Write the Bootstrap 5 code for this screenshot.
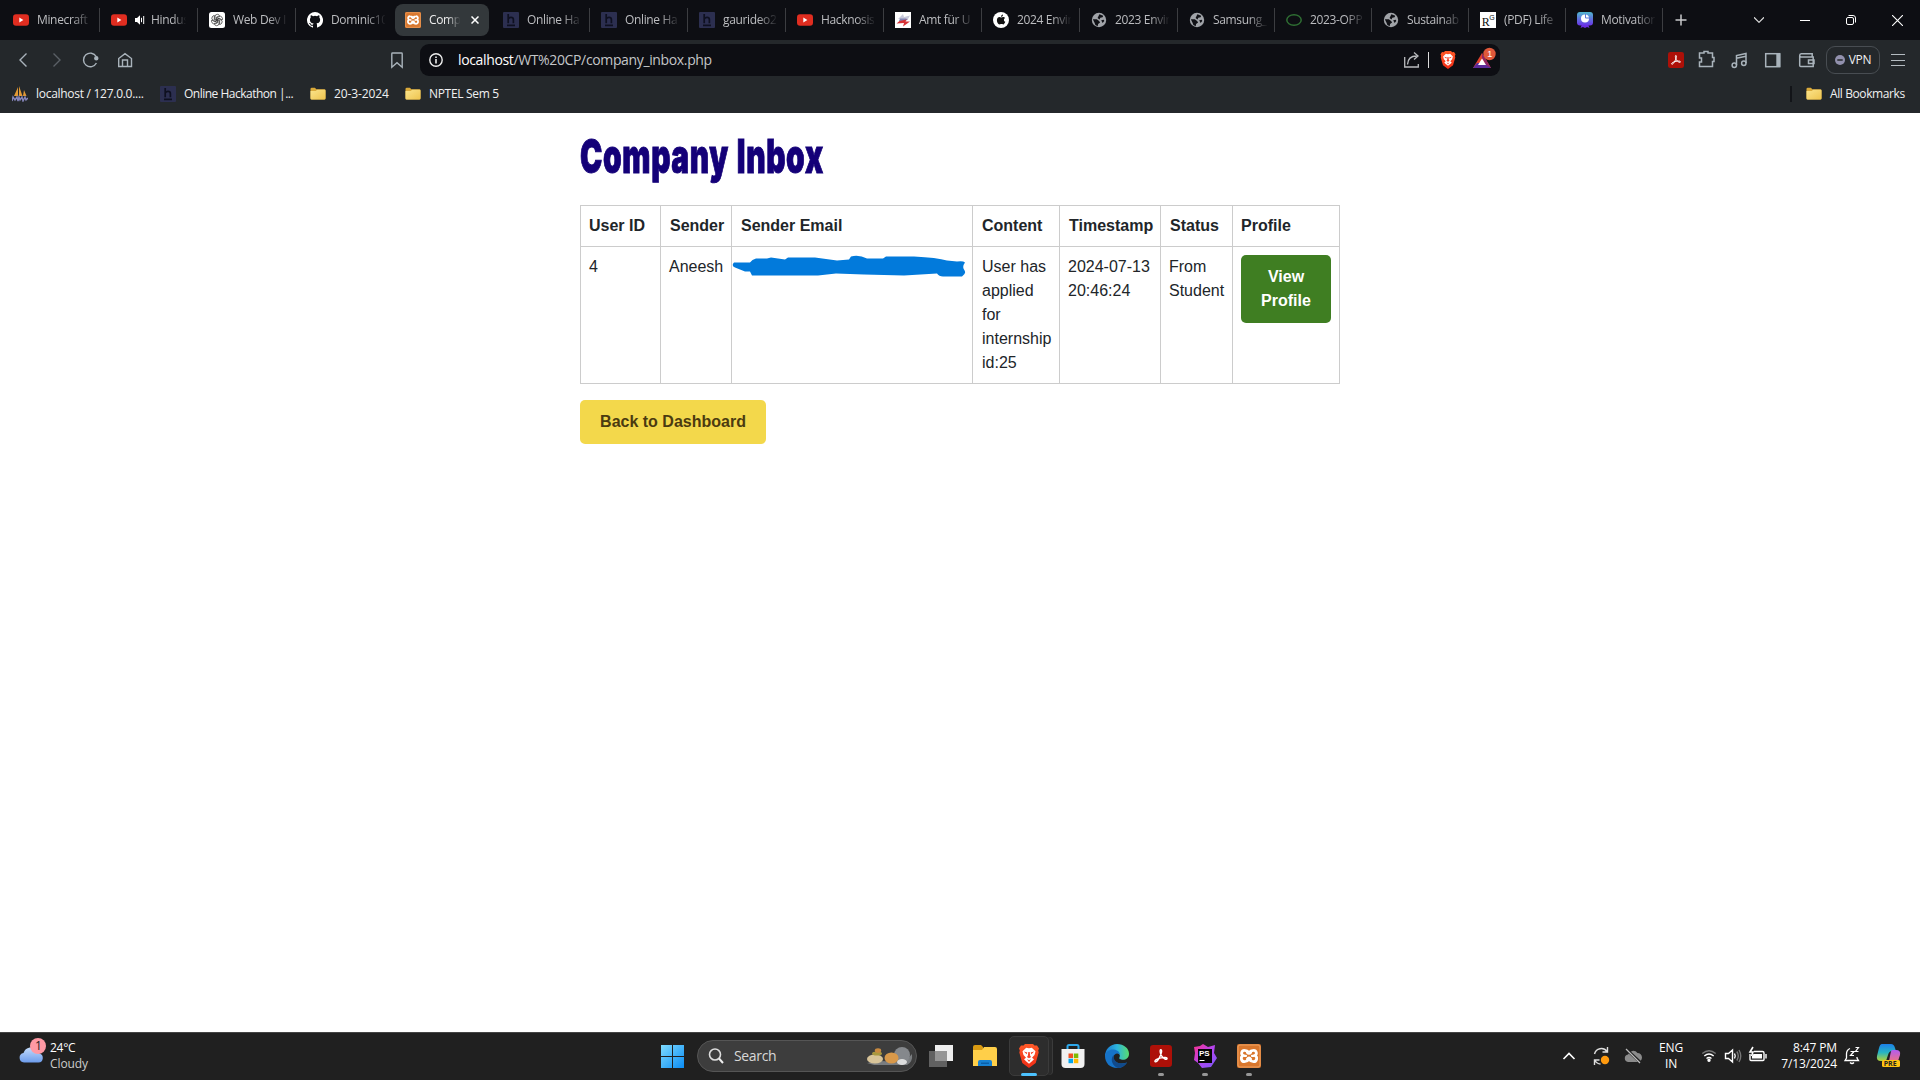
<!DOCTYPE html>
<html lang="en">
<head>
<meta charset="utf-8">
<title>Company Inbox</title>
<link href="https://cdn.jsdelivr.net/npm/bootstrap@5.3.0/dist/css/bootstrap.min.css" rel="stylesheet">
<style>
body{width:1920px;height:1080px;overflow:hidden;font-family:"Open Sans","Noto Sans",sans-serif;background:#fff}
svg{display:block;flex:none}
.ui{font-size:12px;line-height:16px;white-space:nowrap;color:#f0f1f2;flex:none;letter-spacing:-.32px}
.tabstrip{height:40px;background:#0d0e13;padding-left:2px}
.btab{height:24px;width:98px;padding-left:11px;border-right:1px solid #3c3d41;flex:none}
.btab.slim{width:97px}
.btab.bare{border-color:transparent}
.btab.current{height:32px;width:94px;margin:0 3px 0 1px;padding-left:10px;background:#33383b;border:0;border-radius:8px}
.tabtext{font-size:12px;line-height:16px;letter-spacing:-.35px;color:#bcbdc0;white-space:nowrap;width:54px;margin-left:8px;flex:none;-webkit-mask-image:linear-gradient(90deg,#000 65%,transparent 102%);mask-image:linear-gradient(90deg,#000 65%,transparent 102%)}
.current .tabtext{width:33px;color:#eee;-webkit-mask-image:linear-gradient(90deg,#000 55%,transparent 95%);mask-image:linear-gradient(90deg,#000 55%,transparent 95%)}
.btab.audio .tabtext{width:37px;margin-left:6px;-webkit-mask-image:linear-gradient(90deg,#000 60%,transparent 95%);mask-image:linear-gradient(90deg,#000 60%,transparent 95%)}
.wctl{margin-right:36px}
.toolbar{height:40px;background:#24282b}
.omni{width:1080px;height:32px;background:#0d0e13;border-radius:9px;padding-left:8px}
.url{font-size:14px;line-height:20px;color:#c4c6c9;white-space:nowrap;letter-spacing:-.36px;margin-left:14px}
.url b{font-weight:400;color:#fff}
.vpn{width:54px;height:28px;border:1px solid #484d52;border-radius:9px}
.marks{height:33px;background:#24282b;padding-left:12px;padding-bottom:5px}
.viewport{height:919px;font-family:"Liberation Sans",Arial,sans-serif}
.inbox{width:760px;margin:0 auto;padding-top:16px;color:#212529}
.inbox h1{height:76px;width:max-content;margin:0;font-family:Inter,sans-serif;font-weight:900;font-size:47px;line-height:53px;color:#140078;white-space:nowrap;letter-spacing:1px;word-spacing:2px;-webkit-text-stroke:1px #140078;transform-origin:0 0;transform:scaleX(.636)}
.inbox table{width:760px;table-layout:fixed;border-collapse:collapse;margin-bottom:16px;line-height:24px}
.inbox th,.inbox td{border:1px solid #ccc;padding:8px;vertical-align:top;text-align:left;white-space:nowrap}
.inbox th:nth-child(n+2):nth-child(-n+6),.inbox td:nth-child(4){padding-left:9px;padding-right:7px}
.inbox td.wrapped{white-space:normal}
.inbox .btn{font-weight:700;font-size:16px;line-height:24px;padding:10px 20px;border:0;border-radius:5px}
.inbox .btn-view{background:#3f7e22;color:#fff;width:90px;white-space:normal;display:block}
.inbox .btn-back{background:#f3d84b;color:#4b3b10;width:186px;padding:10px 0}
.scribble{position:absolute;left:-1px;top:8px}
.taskbar{height:48px;background:#202020;border-top:1px solid #444;padding-bottom:2px}
.seek{width:220px;height:32px;border-radius:16px;background:#3d3d3d;border:1px solid #555;padding:0 2px 0 10px}
.seek span{font-size:14px;color:#d8d8d8;margin-left:10px;letter-spacing:-.35px}
.app{width:44px;height:46px;flex:none;display:flex;flex-direction:column;align-items:center;justify-content:center;position:relative}
.app.run::after{content:"";position:absolute;bottom:3px;width:6px;height:3px;border-radius:2px;background:#979797}
.app.live::before{content:"";position:absolute;inset:3px 2px 3px 2px;background:#2d2d2d;border:1px solid #3b3b3b;border-radius:5px;box-shadow:4px 0 0 -1px #292929,5px 0 0 -1px #3b3b3b}
.app.live::after{width:16px;background:#4cc2ff}
.app svg{position:relative}
.small2{font-size:12px;line-height:16px;color:#fff;white-space:nowrap;letter-spacing:-.25px}
</style>
<script src="https://cdn.jsdelivr.net/npm/bootstrap@5.3.0/dist/js/bootstrap.bundle.min.js"></script>
</head>
<body>
<svg width="0" height="0" class="position-absolute">
<defs>
<linearGradient id="fold" x2="1" y2="1"><stop stop-color="#fbe48c"/><stop offset="1" stop-color="#eec44e"/></linearGradient>
<linearGradient id="win" x2="1" y2="1"><stop stop-color="#7fdcff"/><stop offset="1" stop-color="#0a8cf5"/></linearGradient>
<linearGradient id="edg" x1="0" x2="1"><stop stop-color="#1b78cf"/><stop offset=".5" stop-color="#2cb4de"/><stop offset="1" stop-color="#59dc6d"/></linearGradient>
<linearGradient id="brv" x2="0" y2="1"><stop stop-color="#ff5a28"/><stop offset="1" stop-color="#f02c16"/></linearGradient>
<linearGradient id="psg" x2="1" y2="1"><stop stop-color="#ff318c"/><stop offset=".5" stop-color="#b345f1"/><stop offset="1" stop-color="#765af8"/></linearGradient>
<linearGradient id="mot" x2="0" y2="1"><stop stop-color="#51b7cf"/><stop offset="1" stop-color="#6a32e8"/></linearGradient>
<linearGradient id="co1" x2="0" y2="1"><stop stop-color="#1c7fe8"/><stop offset=".5" stop-color="#27b5c4"/><stop offset="1" stop-color="#b7d334"/></linearGradient>
<linearGradient id="co2" x2="0" y2="1"><stop stop-color="#b25cf0"/><stop offset="1" stop-color="#ff7a62"/></linearGradient>
<linearGradient id="cld" x2="0" y2="1"><stop stop-color="#c3dcfb"/><stop offset="1" stop-color="#6d9cec"/></linearGradient>
<symbol id="yt" viewBox="0 0 16 16"><rect y="2.200" width="16" height="11.600" rx="3" fill="#e02d20"/><path d="M6.300 5.600v4.800L10.400 8z" fill="#fff"/></symbol>
<symbol id="hh" viewBox="0 0 16 16"><rect width="16" height="16" rx="1" fill="#2c2f50"/><path d="M5.200 2v9.200M5.200 7q1-1.600 2.800-1.600 2.400 0 2.400 2.300v3.500M4 13.300h8" stroke="#0e1020" stroke-width="1.700" fill="none"/></symbol>
<symbol id="globe" viewBox="0 0 16 16"><circle cx="8" cy="8" r="7.200" fill="#a0a3a8"/><path d="M1.800 7.200l4 .1 2.300 1.700 1 1.600-2 1.300-.4 2.300-2.300-1.300-1-2.400zM8.400 2.200l3.800 1.500-.6 1.600-2.300.5-.8 1.800-1.900-1.700zM10.200 8.300l2.600-.5.500 1.300-1.700 2z" fill="#101116"/></symbol>
<symbol id="xam" viewBox="0 0 24 24"><rect width="24" height="24" rx="2" fill="#d9772d"/><rect x="1" y="1" width="22" height="22" rx="2" fill="none" stroke="#eda263"/><path d="M12 8.500Q10.300 6.300 7.600 6.300A2.800 2.800 0 0 0 6.200 11.600A3.200 3.200 0 0 0 7.400 17.700Q10.200 17.700 12 15.200Q13.800 17.700 16.600 17.700A3.200 3.200 0 0 0 17.800 11.600A2.800 2.800 0 0 0 16.400 6.300Q13.700 6.300 12 8.500" fill="none" stroke="#fff" stroke-width="2.800"/><path d="M10 8.500q2 2.500 4 0M10 15.200q2-3 4 0M7.500 11.900h1.500M15 11.900h1.500" fill="none" stroke="#fff" stroke-width="2.200" stroke-linecap="round"/></symbol>
<symbol id="folder" viewBox="0 0 16 16"><path d="M.5 3q0-1.300 1.300-1.300h3L6.500 3.300h8q1 0 1 1V12q0 1.500-1.500 1.500H2Q.5 13.500.5 12z" fill="#d9a93a"/><path d="M.5 5h5.200l1.500-1.300h7.300q1 0 1 1v7.800q0 1-1 1h-13q-1 0-1-1z" fill="url(#fold)"/></symbol>
<symbol id="brave" viewBox="0 0 20 24"><path d="M4.500 1.500L6 0h8l1.500 1.500L18 1.400l2 3-.8 2.100.5 2-3 10.500L10 24l-6.700-5L.3 8.500l.5-2L0 4.400l2-3z" fill="url(#brv)"/><path d="M10 4.300l2.800-.6 3.700 3.500-1 3.800-2.500 2.700 2 1.500-2 2L10 19.700l-3-2.500-2-2 2-1.500L4.500 11l-1-3.800 3.700-3.500z" fill="#fff"/><path d="M4.800 7.500l3.500.9-.5 1.800zM15.200 7.500l-3.500.9.5 1.800zM9.300 8h1.400l.5 4 1 1L10 14.300 7.800 13l1-1zM8 15l2 1.300 2-1.300-2 3z" fill="#f4442a"/></symbol>
<symbol id="acro" viewBox="0 0 24 24"><rect width="24" height="24" rx="3.500" fill="#ad1008"/><path d="M11.700 5.200c1.800 0 1 4-1.300 8.300-1.600 3.200-3.600 5.500-4.800 4.700-1.300-1.100 2.300-3.500 6.300-4.200 3.500-.7 7.200-.6 6.700 1-.6 1.500-4.300-.3-6.100-3.300-1.500-2.500-2-6.500-.8-6.500z" fill="none" stroke="#fff" stroke-width="1.500"/></symbol>
</defs>
</svg>

<header class="tabstrip d-flex align-items-center">
 <div class="btab d-flex align-items-center"><svg width="16" height="16"><use href="#yt"/></svg><span class="tabtext">Minecraft</span></div>
 <div class="btab audio d-flex align-items-center"><svg width="16" height="16"><use href="#yt"/></svg><svg class="ms-2" width="10" height="10" viewBox="0 0 10 10"><path d="M0 3h2l3-2.700v9.400L2 7H0z" fill="#fff"/><path d="M6.500 2.800v4.400M8.700 1v8" stroke="#fff" stroke-width="1"/></svg><span class="tabtext">Hindus</span></div>
 <div class="btab d-flex align-items-center"><svg width="16" height="16" viewBox="0 0 16 16"><rect width="16" height="16" rx="2.500" fill="#fff"/><g fill="none" stroke="#333" stroke-width=".7"><path id="kn" d="M6 8V4.800Q6 2.300 8.300 2.300q1.500 0 2.300 1.200L7.300 5.300v3.900"/><use href="#kn" transform="rotate(60 8 8)"/><use href="#kn" transform="rotate(120 8 8)"/><use href="#kn" transform="rotate(180 8 8)"/><use href="#kn" transform="rotate(240 8 8)"/><use href="#kn" transform="rotate(300 8 8)"/></g></svg><span class="tabtext">Web Dev I</span></div>
 <div class="btab bare d-flex align-items-center"><svg width="16" height="16" viewBox="0 0 16 16"><path fill="#fff" d="M8 0a8 8 0 0 0-2.530 15.590c.4.070.550-.170.550-.380v-1.490c-2.010.370-2.530-.490-2.690-.940-.09-.230-.480-.940-.820-1.130-.280-.150-.680-.520-.010-.530.630-.010 1.080.580 1.230.820.720 1.210 1.870.870 2.330.660.070-.520.280-.870.510-1.070-1.780-.2-3.640-.890-3.640-3.950 0-.870.310-1.590.820-2.150-.080-.2-.360-1.020.080-2.120 0 0 .670-.210 2.200.820a7.600 7.600 0 0 1 4 0c1.530-1.040 2.200-.820 2.200-.820.440 1.100.160 1.920.080 2.120.510.560.820 1.270.820 2.150 0 3.070-1.870 3.750-3.650 3.950.290.250.540.730.540 1.480v2.200c0 .210.150.460.550.380A8 8 0 0 0 8 0"/></svg><span class="tabtext">Dominic10</span></div>
 <div class="btab current d-flex align-items-center"><svg width="16" height="16"><use href="#xam"/></svg><span class="tabtext">Comp</span><svg width="8" height="8" viewBox="0 0 8 8" style="margin-left:9px"><path d="M.5.5l7 7M7.500.5l-7 7" stroke="#fff" stroke-width="1.500"/></svg></div>
 <div class="btab d-flex align-items-center"><svg width="16" height="16"><use href="#hh"/></svg><span class="tabtext">Online Ha</span></div>
 <div class="btab d-flex align-items-center"><svg width="16" height="16"><use href="#hh"/></svg><span class="tabtext">Online Ha</span></div>
 <div class="btab d-flex align-items-center"><svg width="16" height="16"><use href="#hh"/></svg><span class="tabtext">gaurideo2</span></div>
 <div class="btab d-flex align-items-center"><svg width="16" height="16"><use href="#yt"/></svg><span class="tabtext">Hacknosis</span></div>
 <div class="btab d-flex align-items-center"><svg width="16" height="16" viewBox="0 0 16 16"><rect width="16" height="16" fill="#fff"/><path d="M3 7l5-5 1 3 6-1.500-2 3.500z" fill="#c9cadb"/><path d="M5 6.500h6l2 1-3 1.500H4z" fill="#8486b4"/><path d="M1.500 11.500L4.500 9l7-1.500-1 2h4.500L8 14.500l1-3.500z" fill="#d63237"/></svg><span class="tabtext">Amt für U</span></div>
 <div class="btab d-flex align-items-center"><svg width="16" height="16" viewBox="0 0 16 16"><circle cx="8" cy="8" r="8" fill="#fff"/><path d="M8.200 5.400c.6 0 1.300-.6 2.300-.4.700.1 1.200.4 1.500.9-1.700 1-1.400 3.200.3 3.900-.5 1.400-1.300 2.600-2.100 2.600-.7 0-1-.4-1.900-.4s-1.200.4-1.800.4C5 12.400 3.800 10 3.900 8c.1-2 1.300-3 2.500-3 .7 0 1.300.4 1.800.4zM8 4.800c0-1.200.8-2.200 2-2.400.1 1.300-.9 2.400-2 2.400z" fill="#111"/></svg><span class="tabtext">2024 Envir</span></div>
 <div class="btab d-flex align-items-center"><svg width="16" height="16"><use href="#globe"/></svg><span class="tabtext">2023 Envir</span></div>
 <div class="btab slim d-flex align-items-center"><svg width="16" height="16"><use href="#globe"/></svg><span class="tabtext">Samsung_</span></div>
 <div class="btab slim d-flex align-items-center"><svg width="16" height="16" viewBox="0 0 16 16"><ellipse cx="8" cy="8" rx="7.200" ry="5.300" fill="none" stroke="#2f6f33" stroke-width="1.500"/></svg><span class="tabtext">2023-OPP</span></div>
 <div class="btab slim d-flex align-items-center"><svg width="16" height="16"><use href="#globe"/></svg><span class="tabtext">Sustainab</span></div>
 <div class="btab slim d-flex align-items-center"><svg width="16" height="16" viewBox="0 0 16 16"><rect width="16" height="16" fill="#fff"/><text x="1.800" y="14" font-family="Liberation Serif" font-size="12" fill="#111">R</text><text x="9.300" y="7.500" font-family="Liberation Sans" font-size="7" fill="#111">G</text></svg><span class="tabtext">(PDF) Life</span></div>
 <div class="btab slim d-flex align-items-center"><svg width="16" height="16" viewBox="0 0 16 16"><path d="M5 12l-1.500 4L6 15l2 1 2-1 2.500 1-1.500-4z" fill="#6a2be0"/><rect width="16" height="13.500" rx="3" fill="url(#mot)"/><circle cx="8" cy="6.500" r="4" fill="#fff"/><path d="M8.500 2v4h4" fill="none" stroke="#5b7bda"/></svg><span class="tabtext">Motivation</span></div>
 <div class="d-flex align-items-center ms-auto">
  <svg width="12" height="12" viewBox="0 0 12 12" style="margin-right:67px"><path d="M6 .5v11M.5 6h11" stroke="#c8c9cc" stroke-width="1.500"/></svg>
  <svg class="wctl" width="10" height="6" viewBox="0 0 10 6"><path d="M0 .3l5 5 5-5" fill="none" stroke="#ddd" stroke-width="1.200"/></svg>
  <svg class="wctl" width="10" height="10" viewBox="0 0 10 10"><path d="M0 5.500h10" stroke="#fff"/></svg>
  <svg class="wctl" width="10" height="10" viewBox="0 0 10 10"><rect x=".5" y="2.500" width="7" height="7" rx="1.500" fill="none" stroke="#fff"/><path d="M2.500.5H7q2.500 0 2.500 2.500v4.500" fill="none" stroke="#fff"/></svg>
  <svg width="11" height="11" viewBox="0 0 10 10" style="margin-right:17px"><path d="M0 0l10 10M10 0L0 10" stroke="#fff" stroke-width="1"/></svg>
 </div>
</header>

<nav class="toolbar d-flex align-items-center">
 <svg width="420" height="40" viewBox="0 0 420 40" fill="none" stroke="#a9b3bb" stroke-width="1.400"><path d="M26.500 13.500L20 20l6.500 6.500"/><path d="M53.500 13.500L60 20l-6.500 6.500" stroke="#5a6066"/><path d="M96.200 16.500a6.800 6.800 0 1 0 .2 6.500"/><circle cx="96.300" cy="18.300" r="1.500" fill="#a9b3bb"/><path d="M118.700 18.500v8h12.800v-8L125 13.700zM122.500 26.500V20h5v6.500"/><path d="M392.500 13h9q.7 0 .7.700v13.600L397 22.800l-5.200 4.500V13.700q0-.7.700-.7z"/></svg>
 <div class="omni d-flex align-items-center">
  <svg width="16" height="16" viewBox="0 0 16 16"><circle cx="8" cy="8" r="6.200" fill="none" stroke="#eee" stroke-width="1.400"/><path d="M8 7v4.500M8 4.500v1.500" stroke="#eee" stroke-width="1.600"/></svg>
  <span class="url"><b>localhost</b>/WT%20CP/company_inbox.php</span>
  <svg class="ms-auto" width="100" height="32" viewBox="0 0 100 32"><g fill="none" stroke="#b9bbbe" stroke-width="1.300"><path d="M4.700 13v10h13.600v-3M7.500 20.500q.5-8.500 9-8.500M14 8.500l4 3.500-4 3.500"/><path d="M28.500 8v16" stroke="#ddd" stroke-width="1"/></g><svg x="40" y="7" width="16" height="18"><use href="#brave"/></svg><path d="M82 9l9 15H73z" fill="#e0412d"/><path d="M73 24h18l-4-5H77z" fill="#5b2c9b"/><path d="M82 9l9 15-5-3-4-7z" fill="#8d2665"/><path d="M82 14.500l4 6.500h-8z" fill="#fff"/><circle cx="89.500" cy="10" r="6.200" fill="#e0583a"/><text x="87.300" y="13.200" font-size="9" fill="#fff" font-family="Liberation Sans">1</text></svg>
 </div>
 <svg class="ms-auto" width="166" height="40" viewBox="1660 0 166 40"><svg x="1668" y="12" width="16" height="16"><use href="#acro"/></svg><g fill="none" stroke="#a9b3bb" stroke-width="1.500"><path d="M1699.500 13h4.500v-1.500h4V13h4.500v4.500h1.500v4h-1.500v5h-13v-4.500h2v-4h-2z"/><path d="M1736.500 25v-9.500l9.500-2v9.500M1736.500 18.300l9.500-2"/><circle cx="1734.300" cy="25.200" r="2.200"/><circle cx="1743.800" cy="23.200" r="2.200"/><rect x="1765.700" y="13.700" width="14" height="13"/><path d="M1778.300 13.500v13.500" stroke-width="4"/><path d="M1799.700 16v9.500q0 1 1 1h12.500V17h-12q-1.500 0-1.500-1.500 0-1.800 1.500-1.800h11V17M1814 20h-5.500v3.500h5.500z"/></g></svg>
 <div class="vpn d-flex align-items-center justify-content-center gap-1"><svg width="10" height="10" viewBox="0 0 10 10"><circle cx="5" cy="5" r="5" fill="#9291ad"/><path d="M2.300 5h5.400" stroke="#24282b" stroke-width="1.500"/></svg><span class="ui">VPN</span></div>
 <svg width="40" height="40" viewBox="0 0 40 40"><path d="M11 14.500h14M11 20.500h14M11 25.500h14" stroke="#b4bbc0" stroke-width="1.200"/></svg>
</nav>

<div class="marks d-flex align-items-center">
 <svg width="16" height="16" viewBox="0 0 16 16"><path d="M2 10L6 1v9zM7 10V0l3.500 10zM11 10l1-6 2.500 6z" fill="#e29a35"/><path d="M0 15l1-4 2 3 2-3 1 4 1-4 1 3 2-3 1 4 2-4 1 3 2-2" fill="none" stroke="#8585bb" stroke-width="1.400"/></svg>
 <span class="ui ms-2" style="width:124px;letter-spacing:-.28px">localhost / 127.0.0....</span>
 <svg width="16" height="16"><use href="#hh"/></svg>
 <span class="ui ms-2" style="width:126px;letter-spacing:-.5px">Online Hackathon |...</span>
 <svg width="16" height="16"><use href="#folder"/></svg>
 <span class="ui ms-2" style="width:71px;letter-spacing:-.1px">20-3-2024</span>
 <svg width="16" height="16"><use href="#folder"/></svg>
 <span class="ui ms-2">NPTEL Sem 5</span>
 <svg class="ms-auto" width="32" height="16" viewBox="0 0 32 16"><path d="M1 0v16" stroke="#0d0e13" stroke-width="1.500"/><svg x="16" width="16" height="16"><use href="#folder"/></svg></svg>
 <span class="ui ms-2" style="width:90px;letter-spacing:-.4px">All Bookmarks</span>
</div>

<main class="viewport">
 <div class="inbox">
  <h1>Company Inbox</h1>
  <table>
   <colgroup><col style="width:80px"><col style="width:71px"><col style="width:241px"><col style="width:87px"><col style="width:101px"><col style="width:72px"><col></colgroup>
   <tr><th>User ID</th><th>Sender</th><th>Sender Email</th><th>Content</th><th>Timestamp</th><th>Status</th><th>Profile</th></tr>
   <tr>
    <td>4</td><td>Aneesh</td>
    <td class="position-relative"><svg class="scribble" width="236" height="26" viewBox="0 0 236 26"><path d="M3 7.500q-3 3 1 5l5 2 5 2h5l2 4h66l18-2 28 1 40 1 33-2q2 3 6 3h19q5-3 2-7-2-3 1-7-2-2-8-1l-10-1q-10-3-33-4h-28l-3 2h-16q-8-4-16-2l-2 3-12 1-22-3H57l-3 2-14-2-4 1H25q-4 1-6 4z" fill="#027adb"/></svg></td>
    <td class="wrapped">User has applied for internship id:25</td><td class="wrapped">2024-07-13 20:46:24</td><td class="wrapped">From Student</td>
    <td><a class="btn btn-view">View Profile</a></td>
   </tr>
  </table>
  <a class="btn btn-back">Back to Dashboard</a>
 </div>
</main>

<footer class="taskbar d-flex align-items-center">
 <svg width="50" height="47" viewBox="0 0 50 47"><path d="M24 30.500a4.800 4.800 0 0 1-.5-9.500 8 8 0 0 1 14-2.500 5 5 0 0 1 2 3 4.600 4.600 0 0 1-1 9z" fill="url(#cld)"/><circle cx="38" cy="14" r="8" fill="#ff99a4"/><text x="35" y="18.300" font-size="12" font-family="Open Sans" fill="#222">1</text></svg>
 <div class="small2" style="width:604px"><div>24°C</div><div style="color:#ccc;letter-spacing:-.1px">Cloudy</div></div>
 <svg width="43" height="46" viewBox="654 0 43 46"><path d="M661 12h11v11h-11zM673 12h11v11h-11zM661 24h11v11h-11zM673 24h11v11h-11z" fill="url(#win)"/></svg>
 <div class="seek d-flex align-items-center"><svg width="16" height="16" viewBox="0 0 16 16"><circle cx="7" cy="6.500" r="5.500" fill="none" stroke="#ddd" stroke-width="1.600"/><path d="M11 10.500l4 4.500" stroke="#eee" stroke-width="2"/></svg><span>Search</span>
  <svg class="ms-auto" width="50" height="24" viewBox="0 0 50 24"><path d="M3 19l13-2 25 1 7-8q1 8-5 11H10z" fill="#7a7d80"/><circle cx="38" cy="11" r="8" fill="#85888c"/><ellipse cx="11" cy="15" rx="8" ry="4.500" fill="#d8c499"/><ellipse cx="13" cy="9.500" rx="5" ry="2" fill="#a9983f"/><ellipse cx="14" cy="6.500" rx="3.200" ry="2.300" fill="#c98a3f"/><ellipse cx="27.500" cy="14" rx="7" ry="5.500" fill="#d9994a"/><ellipse cx="38" cy="18" rx="5" ry="3" fill="#ddd"/></svg></div>
 <div class="d-flex" style="margin-left:2px">
  <div class="app"><svg width="24" height="24" viewBox="0 0 24 24"><path d="M6 1h18v16H6z" fill="#eee"/><path d="M0 7h18v16H0z" fill="#777" fill-opacity=".75"/></svg></div>
  <div class="app"><svg width="24" height="24" viewBox="0 0 24 24"><path d="M0 3q0-2 2-2h6l2 2v4H0z" fill="#d99a12"/><path d="M0 6h9l2-3h11q2 0 2 2v17H0z" fill="#ffcf49"/><path d="M5 22v-4q0-2 2-2h10q2 0 2 2v4z" fill="#1781d2"/><path d="M8 18.500h8v1.500H8z" fill="#0a5ea8"/></svg></div>
  <div class="app live run"><svg width="20" height="24"><use href="#brave"/></svg></div>
  <div class="app"><svg width="24" height="24" viewBox="0 0 24 24"><path d="M6.500 6V2.500q0-1.500 1.500-1.500h8q1.500 0 1.500 1.500V6" fill="none" stroke="#2da7ea" stroke-width="2"/><path d="M.5 5h23v15q0 4-4 4h-15q-4 0-4-4z" fill="#f1f1f1"/><path d="M7.500 9.500H12V14H7.500z" fill="#f25022"/><path d="M12.800 9.500h4.500V14h-4.500z" fill="#7fba00"/><path d="M7.500 14.700H12v4.500H7.500z" fill="#00a4ef"/><path d="M12.800 14.700h4.500v4.500h-4.500z" fill="#ffb900"/></svg></div>
  <div class="app"><svg width="24" height="24" viewBox="0 0 24 24"><path d="M0 12A12 12 0 0 1 12 0c7 0 12 4.500 12 9.800 0 4-3 6-6 6-2.600 0-4.500-.8-3.500-2.500 1-2 0-4.300-3.500-4.300-5 0-8 3-11 3z" fill="url(#edg)"/><path d="M0 12c1-5 5-7 9-6.500 3.500.4 6 2.700 6 5.500-2-2.500-6-1.500-6.500 2-.5 5 6 8.500 13.500 5.500-2 3.500-5.500 5.500-10 5.500C5 24 0 19 0 12z" fill="#1673c8"/><path d="M8.500 11c-4 5-.5 11.500 4.500 13 4 0 7-2 9-5.500-7.500 3-14-1-13.500-7.500z" fill="#114a8b"/></svg></div>
  <div class="app run"><svg width="22" height="22"><use href="#acro"/></svg></div>
  <div class="app run"><svg width="24" height="24" viewBox="0 0 24 24"><path d="M1 3l6-1 3-2 5 3 7-2-1 8 3 5-6 9-9 1-4-5-4-3 1-7z" fill="url(#psg)"/><rect x="5" y="5" width="14" height="14" fill="#050505"/><text x="6" y="12" font-size="8" font-weight="700" font-family="Liberation Sans" fill="#fff">PS</text><path d="M6.500 16.500h5" stroke="#fff"/></svg></div>
  <div class="app run"><svg width="24" height="24"><use href="#xam"/></svg></div>
 </div>
 <svg class="ms-auto" width="96" height="46" viewBox="1558 0 96 46" fill="none"><path d="M1563.500 26l5.500-5.500 5.500 5.500" stroke="#fff" stroke-width="1.600"/><path d="M1594.500 21a7 7 0 0 1 12.500-2.500M1607.500 14v5h-5M1594.500 32v-5h5M1594.500 27q2.500 4 6 4" stroke="#ddd" stroke-width="1.400"/><circle cx="1605" cy="27" r="4.200" fill="#ff9a0e"/><path d="M1628 29a3.800 3.800 0 0 1 0-7.500 5.500 5.500 0 0 1 9.500-1.500 4.500 4.500 0 0 1 0 9z" fill="#8b8b8b"/><path d="M1626 16l14 13" stroke="#202020" stroke-width="3"/><path d="M1626 16l14 14" stroke="#bbb" stroke-width="1.200"/></svg>
 <div class="small2 text-center" style="width:34px;letter-spacing:-.1px"><div>ENG</div><div>IN</div></div>
 <svg width="88" height="46" viewBox="1688 1 88 46" fill="none" stroke="#fff" stroke-width="1.400"><path d="M1702.300 21.500q6.700-5.500 13.400 0" stroke="#777"/><path d="M1704.300 24q4.700-4 9.400 0M1706.500 26.500q2.500-2 5 0"/><circle cx="1709" cy="28.200" r="1" fill="#fff"/><path d="M1725.500 21.500h3l4-3.500v12l-4-3.500h-3zM1734.500 21.500q1.500 2.500 0 5"/><path d="M1736.800 19.500q3 4.500 0 9M1739 18q3.500 6 0 12" stroke="#777"/><path d="M1754 19.500h8.500q1.500 0 1.500 1.500v6.500q0 1-1 1h-12q-1 0-1-1V22M1766 22v4.500"/><path d="M1753.500 22h8.500v4.500h-10v-2.500z" fill="#fff" stroke="none"/><path d="M1753 15l-3 5h3l-1.500 4" stroke-width="1.600"/></svg>
 <div class="small2 text-end" style="width:61px;letter-spacing:-.12px"><div>8:47 PM</div><div>7/13/2024</div></div>
 <svg width="83" height="46" viewBox="1837 1 83 46" fill="none"><path d="M1850 16.500q-3.500 1.500-3.500 5.500v4l-1.500 2.500h13.500l-1.500-2.500v-1M1850 30.500q2 2 4 0" stroke="#fff" stroke-width="1.300"/><path d="M1850.500 19.500h3.500l-3.500 4h3.500M1855.500 15.500h3l-3 4h3" stroke="#fff" stroke-width="1.200"/><path d="M1882 12h9q3 0 4 4l1 3h-4q-3 0-4 4l-2 6h-5q-5 0-4-5l2-8q1-4 3-4z" fill="url(#co1)"/><path d="M1892 18h4q5 0 4 5l-2 6q-1 4-5 4h-8q3 0 4-4l1-5q1-6 2-6z" fill="url(#co2)"/><rect x="1882" y="28" width="18" height="7" rx="1.500" fill="#ffc312"/><text x="1883.700" y="34" font-size="7" font-weight="700" font-family="Open Sans" fill="#222">PRE</text></svg>
</footer>
</body>
</html>
